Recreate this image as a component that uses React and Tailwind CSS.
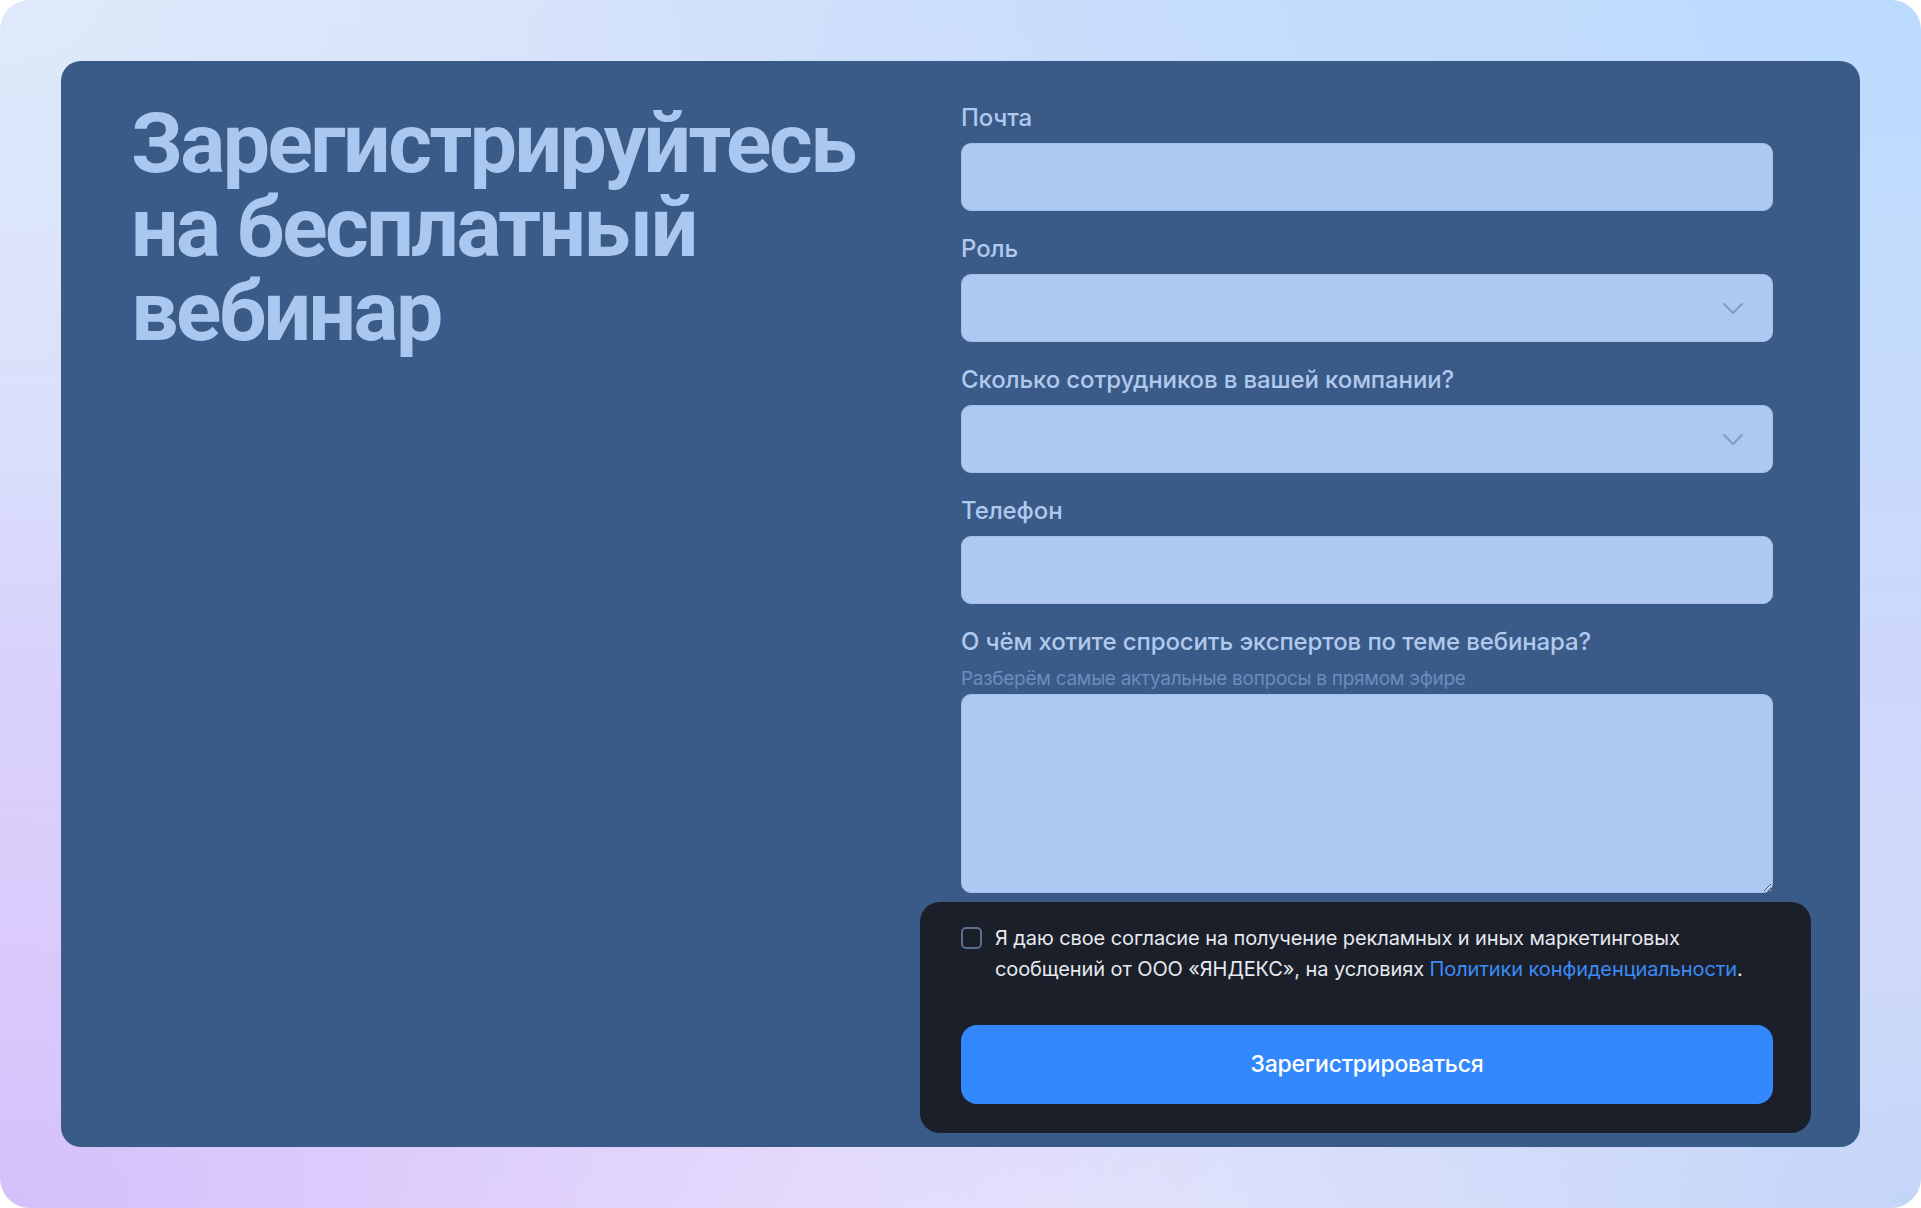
import { useState } from 'react';

const Chevron = () => (
  <svg width="22" height="13" viewBox="0 0 22 13" fill="none" className="shrink-0">
    <path d="M2 2l9 9 9-9" stroke="#7f9cc6" strokeWidth="2" strokeLinecap="round" strokeLinejoin="round" />
  </svg>
);

const Label = ({ text, className = '' }) => (
  <div className={`text-[24px] leading-[30px] font-medium tracking-[-0.005em] text-[#b0c9ec] ${className}`}>{text}</div>
);

const Field = ({ label, select }) => (
  <div className="flex flex-col">
    <Label text={label} className="mb-[10px]" />
    {select ? (
      <button className="h-[68px] w-full rounded-[10px] bg-[#adc8f1] border border-[#a3bfe9] flex items-center justify-end pr-[28px]">
        <Chevron />
      </button>
    ) : (
      <input className="h-[68px] w-full rounded-[10px] bg-[#adc8f1] border border-[#a3bfe9] outline-none px-5 text-[20px] text-[#1b1f2a]" />
    )}
  </div>
);

const App = () => {
  const [agree, setAgree] = useState(false);

  return (
    <div className="w-full h-[1208px] bg-white font-['Inter','Noto_Sans',sans-serif]">
      <div className="h-full rounded-[30px] p-[61px] bg-[radial-gradient(ellipse_at_0%_100%,#d5bffb_0%,rgba(213,191,251,0)_45%),radial-gradient(ellipse_at_100%_100%,#c3d5f8_0%,rgba(195,213,248,0)_40%),radial-gradient(ellipse_at_100%_0%,#bbdbfe_0%,rgba(187,219,254,0)_55%),radial-gradient(ellipse_at_0%_0%,#dfe9fb_0%,rgba(223,233,251,0)_45%),linear-gradient(180deg,#d2def9_0%,#d8d7fc_55%,#ece8fc_100%)]">
        <div className="h-full rounded-[20px] bg-[#3a5a87] flex">
          {/* Heading */}
          <div className="flex-1 pl-[70px] pt-[41px]">
            <h1 className="font-['Roboto',sans-serif] font-bold text-[84px] leading-[84px] tracking-[-0.03em] text-[#a9c7ef]">
              Зарегистрируйтесь
              <br />
              на бесплатный
              <br />
              вебинар
            </h1>
          </div>

          {/* Form */}
          <div className="w-[812px] mr-[87px] pt-[42px] flex flex-col">
            <div className="flex flex-col gap-[23px]">
              <Field label="Почта" />
              <Field label="Роль" select />
              <Field label="Сколько сотрудников в вашей компании?" select />
              <Field label="Телефон" />
              <div className="flex flex-col">
                <Label text="О чём хотите спросить экспертов по теме вебинара?" />
                <div className="mt-[10px] text-[19px] leading-[24px] text-[#6c8cbd] tracking-[-0.015em]">
                  Разберём самые актуальные вопросы в прямом эфире
                </div>
                <textarea className="mt-[3px] h-[199px] w-full rounded-[10px] bg-[#adc8f1] border border-[#a3bfe9] outline-none p-4 text-[20px]" />
              </div>
            </div>

            <div className="mt-[9px] -ml-[41px] -mr-[38px] rounded-[20px] bg-[#1b1f2a] pl-[41px] pr-[38px] pt-[21px] pb-[29px]">
              <label className="flex gap-[13px] cursor-pointer">
                <span
                  onClick={() => setAgree(!agree)}
                  className="mt-[4px] w-[21px] h-[22px] shrink-0 rounded-[5px] border-2 border-[#5d6d8c]"
                />
                <span className="text-[20px] leading-[31px] text-[#e6e9ef] tracking-[-0.005em]">
                  Я даю свое согласие на получение рекламных и иных маркетинговых
                  <br />
                  сообщений от ООО «ЯНДЕКС», на условиях{' '}
                  <a className="text-[#3b8bf7]">Политики конфиденциальности</a>.
                </span>
              </label>
              <button className="mt-[40px] h-[79px] w-full rounded-[16px] bg-[#3388fe] text-white text-[23px] font-medium tracking-[-0.01em]">
                Зарегистрироваться
              </button>
            </div>
          </div>
        </div>
      </div>
    </div>
  );
};

export default App;
